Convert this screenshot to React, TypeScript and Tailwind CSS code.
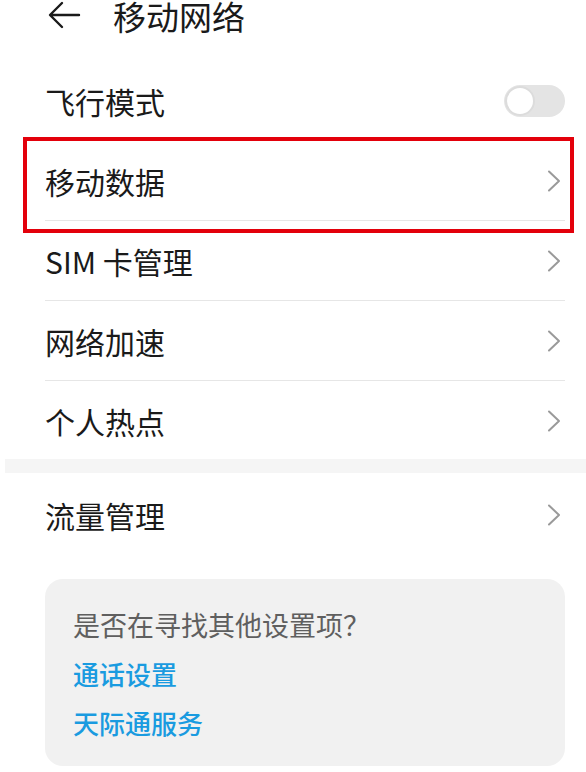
const FONT = 'font-["Noto_Sans_CJK_SC","Noto_Sans",sans-serif]'

function Chevron() {
  return (
    <svg width="14" height="22" viewBox="0 0 14 22" fill="none" stroke="#9a9a9a" strokeWidth="2" strokeLinecap="round" strokeLinejoin="round" className="mr-[4px]">
      <path d="M2 1.5l10 9.5-10 9.5" />
    </svg>
  )
}

function Row({ label, divider = true }: { label: string; divider?: boolean }) {
  return (
    <div className="h-[80px] pl-[45px] pr-[21px] relative flex items-center justify-between">
      <span className="text-[30px] text-[#1a1a1a] leading-none">{label}</span>
      <Chevron />
      {divider && <div className="absolute left-[45px] right-[21px] bottom-0 h-px bg-[#e6e6e6]" />}
    </div>
  )
}

export default function App() {
  return (
    <div className={`w-[586px] h-[772px] bg-white overflow-hidden relative ${FONT}`}>
      {/* header */}
      <div className="h-[61px] flex items-start">
        <div className="h-[33px] flex items-center pl-[48px] gap-[32px]">
          <svg width="33" height="28" viewBox="0 0 33 28" fill="none" stroke="#1a1a1a" strokeWidth="2.4" strokeLinecap="round" strokeLinejoin="round" className="-mt-[3px]">
            <path d="M31 14H3M14 2L2 14l12 12" />
          </svg>
          <span className="text-[33px] leading-none text-[#1a1a1a] -mt-[1px]">移动网络</span>
        </div>
      </div>

      {/* 飞行模式 */}
      <div className="h-[80px] pl-[45px] pr-[21px] flex items-center justify-between">
        <span className="text-[30px] text-[#1a1a1a] leading-none">飞行模式</span>
        <div className="w-[61px] h-[32px] rounded-full bg-[#e4e4e4] p-[1px] flex items-center">
          <div className="w-[30px] h-[30px] rounded-full bg-white border-[2px] border-[#dcdcdc]" />
        </div>
      </div>

      <Row label="移动数据" />
      <Row label="SIM 卡管理" />
      <Row label="网络加速" />
      <div className="h-[78px]">
        <Row label="个人热点" divider={false} />
      </div>

      <div className="h-[14px] ml-[5px] bg-[#f5f5f5]" />

      <div className="pt-[2px]">
        <Row label="流量管理" divider={false} />
      </div>

      {/* suggestion card */}
      <div className="ml-[45px] mr-[21px] mt-[24px] h-[187px] rounded-[18px] bg-[#f1f1f1] px-[28px] pt-[32px]">
        <div className="text-[27px] leading-none text-[#5f5f5f]">是否在寻找其他设置项？</div>
        <div className="text-[26px] leading-none text-[#1a9be0] font-medium mt-[23px]">通话设置</div>
        <div className="text-[26px] leading-none text-[#1a9be0] font-medium mt-[23px]">天际通服务</div>
      </div>

      {/* red annotation box */}
      <div className="absolute left-[23px] top-[137px] w-[551px] h-[96px] border-[4px] border-[#e3000b]" />
    </div>
  )
}
